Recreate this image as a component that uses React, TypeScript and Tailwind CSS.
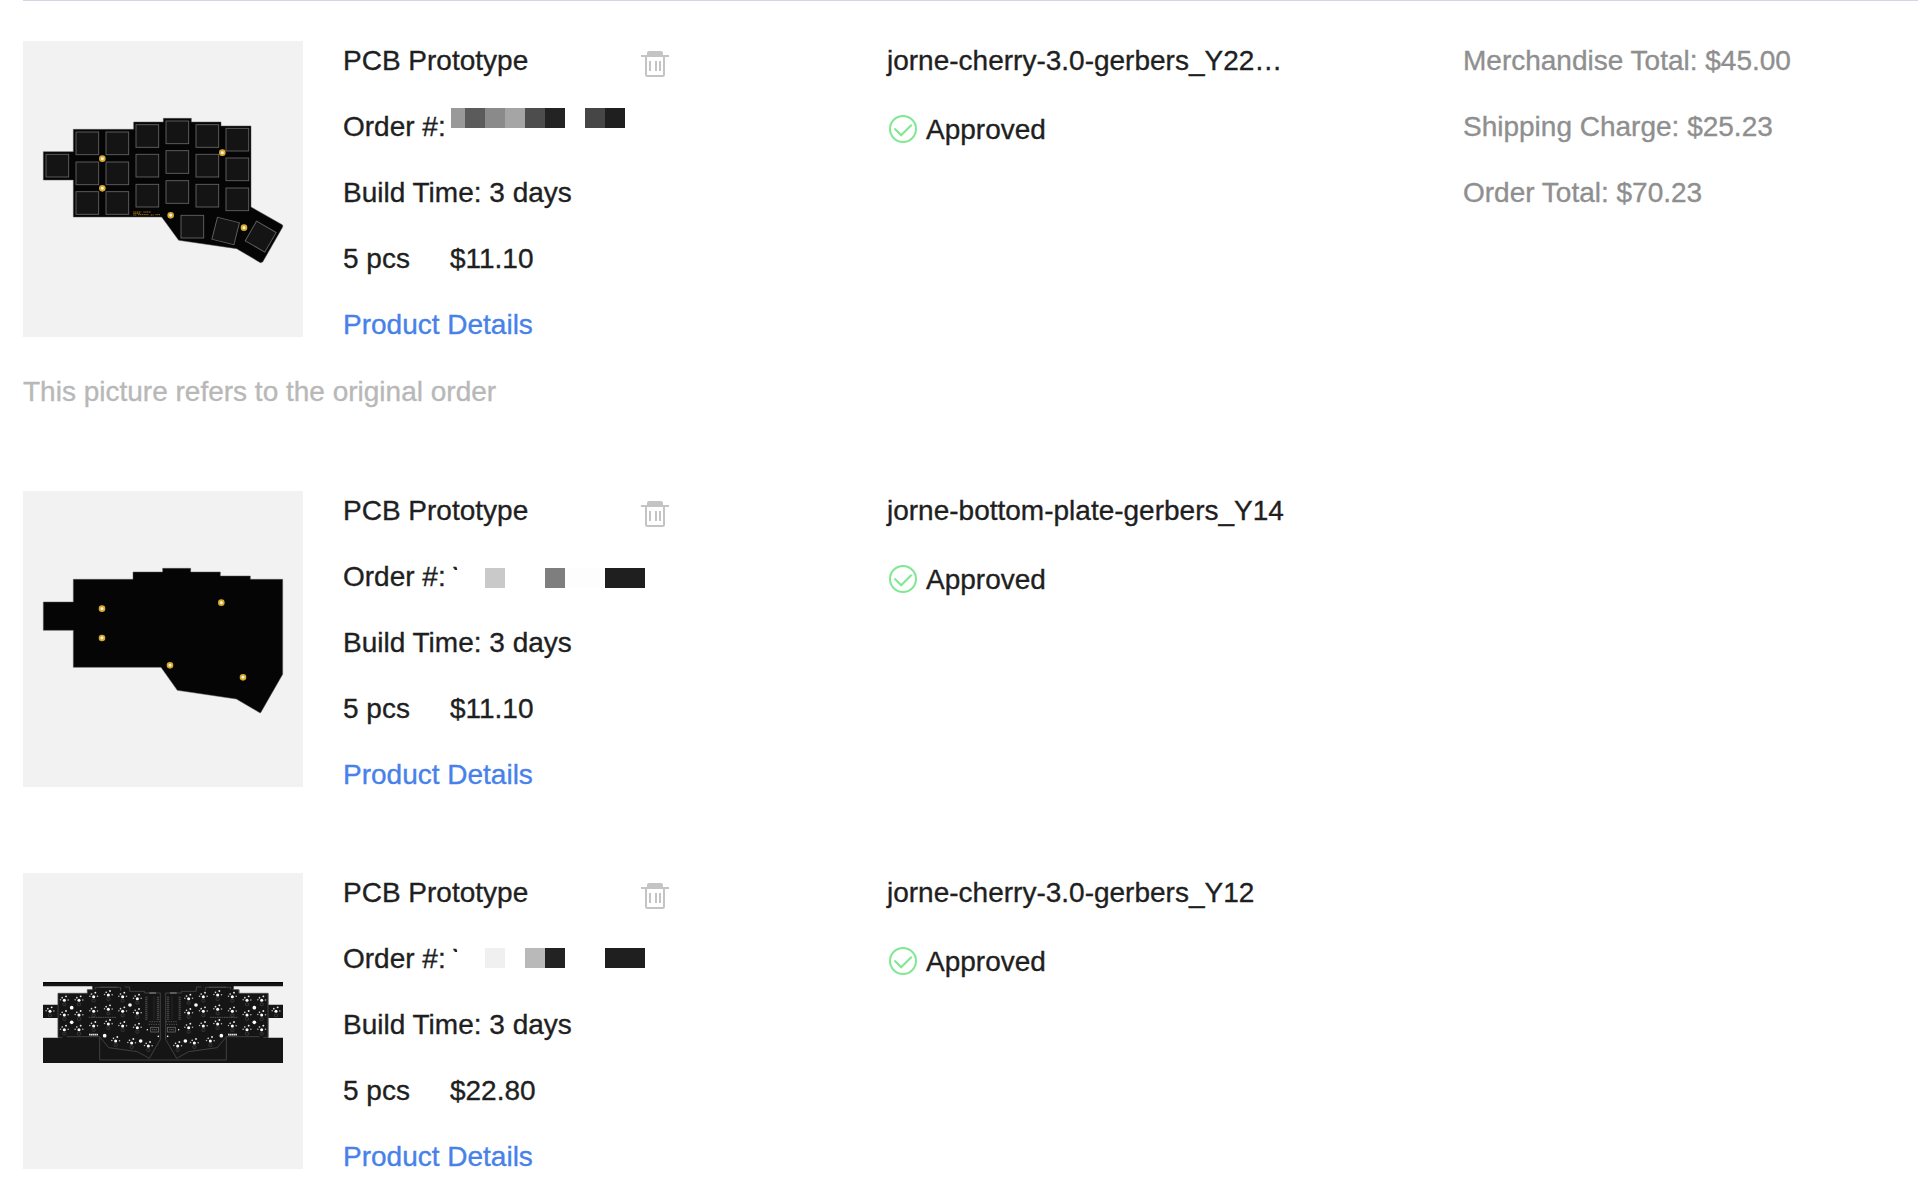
import React from "react";

type Block = { left: string; color: string };
type Order = {
  file: string;
  price: string;
  board: React.ReactNode;
  note?: string;
  clipped?: boolean;
  mosaicTop: string;
  blocks: Block[];
};

/* ---------- Board previews ---------- */

const squareKeys: [number, number][] = [
  [172, 497],
  [262, 430], [262, 520], [262, 609],
  [352, 430], [352, 520], [352, 609],
  [442, 408], [442, 497], [442, 587],
  [532, 397], [532, 486], [532, 576],
  [622, 408], [622, 497], [622, 587],
  [712, 419], [712, 508], [712, 598],
  [577, 680],
];

function Hole({ x, y }: { x: number; y: number }) {
  return <circle cx={x} cy={y} r="7.2" fill="#f8f4e6" stroke="#d8aa2b" strokeWidth="5.5" />;
}

function Key({ x, y, angle = 0 }: { x: number; y: number; angle?: number }) {
  return (
    <rect
      x={x - 34}
      y={y - 34}
      width="68"
      height="68"
      fill="#141414"
      stroke="#606060"
      strokeWidth="2.8"
      transform={`rotate(${angle} ${x} ${y})`}
    />
  );
}

function TopPlate() {
  return (
    <svg viewBox="69 123 840 888" className="h-full w-full" aria-hidden="true">
      <path
        d="M130 455H220V388H401V366H490V355H574V366H663V378H753V621L848 675V681L788 786L781 788L710 746L536 721L485 651H220V540H130Z"
        fill="#050505"
        stroke="#555"
        strokeWidth="1.5"
      />
      {squareKeys.map(([x, y]) => (
        <Key key={`${x}-${y}`} x={x} y={y} />
      ))}
      <Key x={677} y={693} angle={14} />
      <Key x={782} y={710} angle={30} />
      <path
        d="M400 636H424M430 636H453M400 640H420M400 645H409M414 644H446M452 645H461M466 644H480"
        stroke="#b8901e"
        strokeWidth="3"
        strokeDasharray="4 1.5"
        opacity=".8"
      />
      <Hole x={307} y={476} />
      <Hole x={307} y={565} />
      <Hole x={667} y={458} />
      <Hole x={512} y={646} />
      <Hole x={732} y={683} />
    </svg>
  );
}

function BottomPlate() {
  return (
    <svg viewBox="69 33 840 888" className="h-full w-full" aria-hidden="true">
      <path
        d="M130 366H220V298H399V276H488V265H572V276H661V288H751V298H848V583L782 698H779L709 657L532 631L483 562H220V451H130Z"
        fill="#050505"
        stroke="#555"
        strokeWidth="1.5"
      />
      <Hole x={306} y={386} />
      <Hole x={306} y={474} />
      <Hole x={664} y={368} />
      <Hole x={510} y={556} />
      <Hole x={729} y={592} />
    </svg>
  );
}

const leftSwitches: [number, number][] = [
  [60, 124],
  [103, 91], [103, 135], [103, 179],
  [147, 91], [147, 135], [147, 179],
  [191, 80], [191, 124], [191, 168],
  [235, 75], [235, 118], [235, 162],
  [278, 80], [278, 124], [278, 168],
  [322, 86], [322, 129], [322, 173],
  [257, 213], [305, 219], [355, 228],
];

const rightSwitches: [number, number][] = leftSwitches.map(([x, y]) => [798 - x, y]);

function Switch({ x, y }: { x: number; y: number }) {
  return (
    <g transform={`translate(${x} ${y})`}>
      <circle r="4.6" fill="#fff" />
      <circle cx="-11.500" cy="-1.500" r="2.3" fill="#bbb" />
      <circle cx="11.500" cy="-1" r="2.3" fill="#bbb" />
      <circle cx="-6.500" cy="-8" r="2.5" fill="#ddd" />
      <circle cx="5" cy="-12" r="2.8" fill="#eee" />
      <rect x="-4.5" y="8" width="9" height="8" rx="2" fill="none" stroke="#484848" strokeWidth="2" />
    </g>
  );
}

function HalfOutline() {
  return (
    <g fill="none" stroke="#484848" strokeWidth="2.5">
      <path d="M84 70H172V59H190M196 58V52H272V62M284 51H299V64H344V69H391V208L358 265L322 245L236 233L209 200H110M98 202H84V70" />
      <path d="M209 202V270H399" />
      <path d="M209 52H262" strokeWidth="4" />
      <path d="M176 142H258" stroke="#606060" strokeDasharray="5 2" />
      <path d="M349 80V150M384 80V150" stroke="#505050" strokeWidth="7" strokeDasharray="3 3" />
      <path d="M372 80V150" stroke="#3a3a3a" strokeWidth="6" strokeDasharray="2 4" />
      <path d="M358 69H378" stroke="#777" strokeWidth="4" />
      <path d="M358 155H390M356 163H390" stroke="#606060" strokeDasharray="4 3" />
      <rect x="362" y="172" width="24" height="14" stroke="#666" />
      <path d="M367 179H381" stroke="#999" strokeDasharray="3 3" />
      <path d="M177 194H204" stroke="#ddd" strokeWidth="5" strokeDasharray="5 1" />
      <g fill="#fff" stroke="none">
        <circle cx="125" cy="113" r="5.5" />
        <circle cx="125" cy="157" r="5.5" />
        <circle cx="300" cy="105" r="5.5" />
        <circle cx="224" cy="197" r="5.5" />
        <circle cx="332" cy="213" r="5.5" />
        <circle cx="385" cy="199" r="2.5" />
        <circle cx="352" cy="179" r="2.2" />
      </g>
    </g>
  );
}

function PanelBoard() {
  return (
    <svg viewBox="-21 -291 840 888" className="h-full w-full" aria-hidden="true">
      <path
        d="M39 36H759V49H611V59H628V70H715V104H759V144H715V203H759V279H39V203H84V144H39V104H84V70H172V59H187V49H39Z"
        fill="#151515"
      />
      <path d="M39 38H759" stroke="#050505" strokeWidth="3" />
      <HalfOutline />
      <g transform="translate(798 0) scale(-1 1)">
        <HalfOutline />
      </g>
      {leftSwitches.concat(rightSwitches).map(([x, y]) => (
        <Switch key={`${x}-${y}`} x={x} y={y} />
      ))}
    </svg>
  );
}

/* ---------- Icons ---------- */

function TrashIcon() {
  return (
    <svg viewBox="0 0 28 26" className="h-[26px] w-7" aria-hidden="true">
      <path d="M6 4V2Q6 0 8 0H20Q22 0 22 2V4H28V6H0V4Z" fill="#c4c4c4" />
      <path d="M5 5V23.5Q5 25 6.500 25H21.500Q23 25 23 23.500V5" fill="none" stroke="#c4c4c4" strokeWidth="2" />
      <path d="M9 10V20M15 10V20M19 10V20" stroke="#c4c4c4" strokeWidth="2" />
    </svg>
  );
}

function ApprovedIcon() {
  return (
    <svg viewBox="0 0 28 28" className="-mt-0.5 size-7" fill="none" stroke="#7fe892" strokeWidth="2" aria-hidden="true">
      <circle cx="14" cy="14" r="13" />
      <path d="M5.500 13.500L12.200 20.300L22.700 9.700" />
    </svg>
  );
}

/* ---------- Data ---------- */

const orders: Order[] = [
  {
    file: "jorne-cherry-3.0-gerbers_Y22…",
    price: "$11.10",
    board: <TopPlate />,
    note: "This picture refers to the original order",
    mosaicTop: "top-[14px]",
    blocks: [
      { left: "left-[108px] w-[14px]", color: "bg-[#999999]" },
      { left: "left-[122px] w-5", color: "bg-[#5b5b5b]" },
      { left: "left-[142px] w-5", color: "bg-[#8a8a8a]" },
      { left: "left-[162px] w-5", color: "bg-[#a5a5a5]" },
      { left: "left-[182px] w-5", color: "bg-[#4d4d4d]" },
      { left: "left-[202px] w-5", color: "bg-[#232323]" },
      { left: "left-[242px] w-5", color: "bg-[#464646]" },
      { left: "left-[262px] w-5", color: "bg-[#1f1f1f]" },
    ],
  },
  {
    file: "jorne-bottom-plate-gerbers_Y14",
    price: "$11.10",
    board: <BottomPlate />,
    clipped: true,
    mosaicTop: "top-6",
    blocks: [
      { left: "left-[142px] w-5", color: "bg-[#c9c9c9]" },
      { left: "left-[202px] w-5", color: "bg-[#7e7e7e]" },
      { left: "left-[222px] w-10", color: "bg-[#fdfdfd]" },
      { left: "left-[262px] w-10", color: "bg-[#1f1f1f]" },
    ],
  },
  {
    file: "jorne-cherry-3.0-gerbers_Y12",
    price: "$22.80",
    board: <PanelBoard />,
    clipped: true,
    mosaicTop: "top-[22px]",
    blocks: [
      { left: "left-[142px] w-5", color: "bg-[#f0f0f0]" },
      { left: "left-[182px] w-5", color: "bg-[#b9b9b9]" },
      { left: "left-[202px] w-5", color: "bg-[#222222]" },
      { left: "left-[262px] w-10", color: "bg-[#1f1f1f]" },
    ],
  },
];

/* ---------- Layout ---------- */

function OrderRow({ order }: { order: Order }) {
  return (
    <article>
      <div className="flex h-[296px] items-start">
        <div className="h-[296px] w-[280px] shrink-0 bg-[#f2f2f2]">{order.board}</div>

        <div className="-mt-[13px] ml-10 w-[544px] shrink-0 leading-[66px]">
          <div className="flex w-[326px] items-center justify-between">
            <h2>PCB Prototype</h2>
            <button className="mt-1.5" aria-label="Delete">
              <TrashIcon />
            </button>
          </div>
          <div className="relative whitespace-pre">
            Order #: {order.clipped && <span className="-ml-px inline-block [clip-path:inset(0_14px_40px_0)]">Y</span>}
            {order.blocks.map((b) => (
              <span key={b.left} className={`absolute h-5 ${order.mosaicTop} ${b.left} ${b.color}`} />
            ))}
          </div>
          <p>Build Time: 3 days</p>
          <div className="flex gap-10">
            <span>5 pcs</span>
            <span>{order.price}</span>
          </div>
          <a className="block text-[#4781ea]">Product Details</a>
        </div>

        <div className="-mt-[13px] w-[576px] shrink-0 leading-[66px]">
          <p>{order.file}</p>
          <div className="mt-[3px] flex items-center gap-[9px] pl-0.5">
            <ApprovedIcon />
            <span>Approved</span>
          </div>
        </div>

        {order.note && (
          <dl className="-mt-[13px] whitespace-nowrap leading-[66px] text-[#8f8f8f]">
            <div>Merchandise Total: $45.00</div>
            <div>Shipping Charge: $25.23</div>
            <div>Order Total: $70.23</div>
          </dl>
        )}
      </div>
      {order.note && <p className="h-[68px] pt-[39px] leading-8 text-[#b8b8b8]">{order.note}</p>}
    </article>
  );
}

export default function App() {
  return (
    <main className="h-[1204px] overflow-hidden bg-white pl-[23px] font-['Liberation_Sans',Arial,sans-serif] text-[28px] text-[#1f1f1f] [-webkit-text-stroke:0.35px_currentColor]">
      <div className="flex flex-col gap-[86px] border-t border-[#d5d5e5] pt-10">
        {orders.map((o) => (
          <OrderRow key={o.file} order={o} />
        ))}
      </div>
    </main>
  );
}
